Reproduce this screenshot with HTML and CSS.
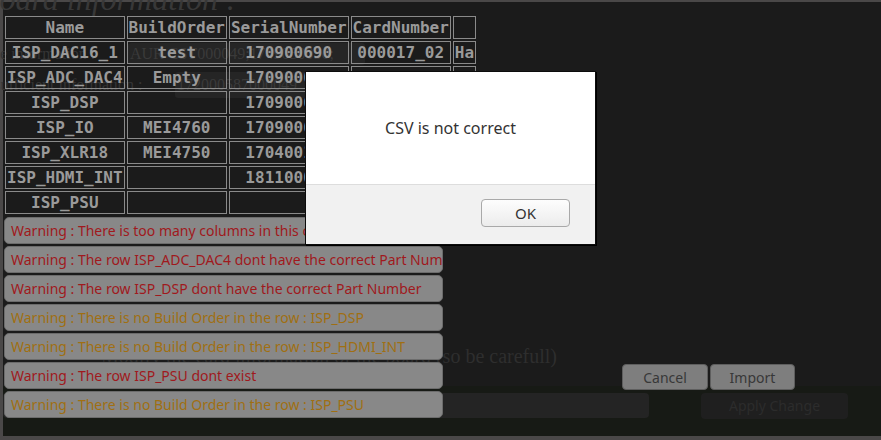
FILE: index.html
```html
<!DOCTYPE html>
<html>
<head>
<meta charset="utf-8">
<title>CSV import</title>
<link rel="stylesheet" href="styles.css">
</head>
<body>
<div class="frame">
  <div class="page">
    <h1 class="page-title">Board information :</h1>
    <div class="page-row row-base"><span class="page-label">Base information :</span><span class="page-value value-base">AUR CST000049;1749050050;</span></div>
    <div class="page-row row-insuf"><span class="page-label">Insufficient information :</span><span class="page-value value-insuf">172000587000049</span></div>
    <p class="page-note">Modify the card information of the board (so be carefull)</p>
    <div class="page-footer">
      <div class="page-input"></div>
      <div class="page-apply">Apply Change</div>
    </div>
  </div>

  <div class="popup">
    <table class="csv">
      <tr><th>Name</th><th>BuildOrder</th><th>SerialNumber</th><th>CardNumber</th><th></th></tr>
      <tr><td>ISP_DAC16_1</td><td>test</td><td>170900690</td><td>000017_02</td><td class="extra">Ha</td></tr>
      <tr><td>ISP_ADC_DAC4</td><td>Empty</td><td>170900691</td><td>000017_03</td><td class="extra">Ha</td></tr>
      <tr><td>ISP_DSP</td><td></td><td>170900692</td><td>000017_04</td><td class="extra">Ha</td></tr>
      <tr><td>ISP_IO</td><td>MEI4760</td><td>170900693</td><td>000017_05</td><td class="extra">Ha</td></tr>
      <tr><td>ISP_XLR18</td><td>MEI4750</td><td>170400120</td><td>000017_06</td><td class="extra">Ha</td></tr>
      <tr><td>ISP_HDMI_INT</td><td></td><td>181100045</td><td>000017_07</td><td class="extra">Ha</td></tr>
      <tr><td>ISP_PSU</td><td></td><td></td><td></td><td class="extra"></td></tr>
    </table>
    <div class="lower">
      <div class="warnings">
        <div class="warning error">Warning : There is too many columns in this csv</div>
        <div class="warning error">Warning : The row ISP_ADC_DAC4 dont have the correct Part Number</div>
        <div class="warning error">Warning : The row ISP_DSP dont have the correct Part Number</div>
        <div class="warning notice">Warning : There is no Build Order in the row : ISP_DSP</div>
        <div class="warning notice">Warning : There is no Build Order in the row : ISP_HDMI_INT</div>
        <div class="warning error">Warning : The row ISP_PSU dont exist</div>
        <div class="warning notice">Warning : There is no Build Order in the row : ISP_PSU</div>
      </div>
      <div class="actions">
        <button class="btn btn-cancel">Cancel</button>
        <button class="btn btn-import">Import</button>
      </div>
    </div>
  </div>

  <div class="dialog">
    <div class="dialog-body">CSV is not correct</div>
    <div class="dialog-footer"><button class="dialog-ok">OK</button></div>
  </div>
</div>
</body>
</html>
```

FILE: styles.css
```css
html, body {
  margin: 0;
  padding: 0;
}

body {
  background: #4a4848;
  width: 881px;
  height: 440px;
  overflow: hidden;
}

.frame {
  position: relative;
  margin: 2px 0 0 3px;
  width: 878px;
  height: 434px;
  background: #1b1b1b;
}

/* ---------- background page (dimmed) ---------- */
.page {
  position: absolute;
  inset: 0;
  z-index: 0;
  display: flex;
  flex-direction: column;
  font-family: "Liberation Serif", serif;
  color: #353535;
}

.page-title {
  margin: -21px 0 0 -23px;
  font-size: 32px;
  line-height: 36px;
  font-weight: normal;
  font-style: italic;
  color: #383838;
  white-space: nowrap;
}

.page-row {
  display: flex;
  align-items: center;
  font-size: 16px;
  white-space: nowrap;
}

.row-base {
  margin: 26px 0 0 -27px;
  height: 22px;
}

.row-base .page-label {
  width: 152px;
}

.row-insuf {
  margin: 7px 0 0 -22px;
  height: 26px;
}

.row-insuf .page-label {
  width: 194px;
}

.page-value {
  display: flex;
  align-items: center;
  background: #252525;
  border-radius: 3px;
  padding-left: 2px;
  color: #3a3a3a;
  overflow: hidden;
}

.value-base {
  width: 235px;
  height: 22px;
}

.value-insuf {
  width: 130px;
  height: 26px;
}

.page-note {
  margin: 247px 0 0 0;
  width: 554px;
  font-size: 20px;
  line-height: 23px;
  text-align: right;
  white-space: nowrap;
  color: #2e2e2e;
}

.page-footer {
  margin-top: 18px;
  flex: 1;
  background: #171a15;
  display: flex;
  align-items: flex-start;
  padding-top: 7px;
}

.page-input {
  width: 646px;
  height: 25px;
  border-radius: 4px;
  background: #242424;
}

.page-apply {
  margin-left: 52px;
  width: 147px;
  height: 26px;
  border-radius: 4px;
  background: #1f1f1f;
  color: #2c2c2c;
  font-family: "Noto Sans", sans-serif;
  font-size: 14px;
  line-height: 26px;
  text-align: center;
}

/* ---------- import popup ---------- */
.popup {
  position: relative;
  z-index: 1;
  padding-top: 12px;
}

.csv {
  border-collapse: separate;
  border-spacing: 2px;
  font-family: "DejaVu Sans Mono", monospace;
  font-size: 16px;
  font-weight: bold;
  color: #9a9a9a;
}

.csv th,
.csv td {
  border: 1px solid #8a8a8a;
  padding: 1px;
  line-height: 19px;
  height: 19px;
  text-align: center;
  white-space: nowrap;
  font-weight: bold;
}

.csv td.extra {
  text-align: left;
}

.lower {
  display: flex;
  align-items: flex-start;
  margin-top: 1px;
}

.warnings {
  margin-left: 1px;
  width: 439px;
  display: flex;
  flex-direction: column;
  gap: 2px;
}

.warning {
  box-sizing: border-box;
  height: 27px;
  border: 1px solid #6c6c6c;
  border-radius: 5px;
  background: #888888;
  padding: 0 6px;
  font-family: "Noto Sans", sans-serif;
  font-size: 14px;
  line-height: 25px;
  white-space: nowrap;
  overflow: hidden;
}

.warning.error {
  color: #a0191d;
}

.warning.notice {
  color: #a06f12;
}

.actions {
  display: flex;
  gap: 2px;
  margin: 147px 0 0 179px;
}

.btn {
  box-sizing: border-box;
  height: 26px;
  border: 1px solid #5e5e5e;
  border-radius: 4px;
  background: #7e7e7e;
  color: #383838;
  font-family: "Noto Sans", sans-serif;
  font-size: 14px;
  padding: 0;
}

.btn-cancel {
  width: 86px;
}

.btn-import {
  width: 85px;
}

/* ---------- alert dialog ---------- */
.dialog {
  position: absolute;
  z-index: 2;
  left: 302px;
  top: 69px;
  width: 291px;
  height: 174px;
  box-sizing: border-box;
  border: 1px solid #0c0c0c;
  box-shadow: 1px 1px 0 #000;
  background: #ffffff;
  display: flex;
  flex-direction: column;
  font-family: "Noto Sans", sans-serif;
}

.dialog-body {
  height: 112px;
  display: flex;
  align-items: center;
  justify-content: center;
  font-size: 16px;
  color: #333333;
}

.dialog-footer {
  flex: 1;
  background: #f1f1f1;
  border-top: 1px solid #dddddd;
  display: flex;
  justify-content: flex-end;
  align-items: flex-start;
  padding: 14px 25px 0 0;
}

.dialog-ok {
  box-sizing: border-box;
  width: 89px;
  height: 28px;
  border: 1px solid #a9a9a9;
  border-radius: 4px;
  background: linear-gradient(#fdfdfd, #ececec);
  color: #333333;
  font-family: "Noto Sans", sans-serif;
  font-size: 15px;
  padding: 0;
}
```
